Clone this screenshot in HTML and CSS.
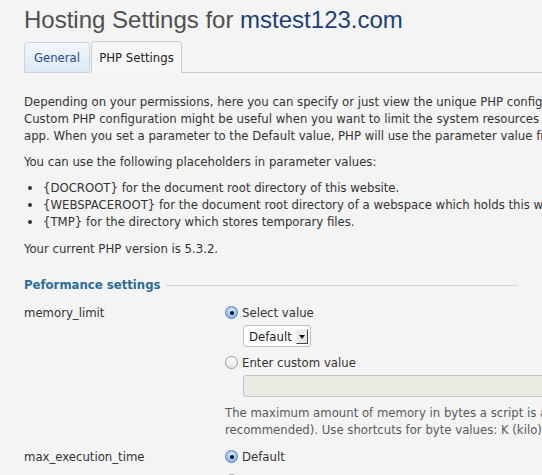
FILE: index.html
```html
<!DOCTYPE html>
<html>
<head>
<meta charset="utf-8">
<link rel="stylesheet" href="styles.css">
</head>
<body>
<h1 class="title">Hosting Settings for <span class="domain">mstest123.com</span></h1>
<div class="tabs">
  <div class="tab tab-general">General</div>
  <div class="tab tab-active">PHP Settings</div>
  <div class="tabs-rest"></div>
</div>
<div class="content">
  <p class="para">Depending on your permissions, here you can specify or just view the unique PHP configuration settings for this website.<br>Custom PHP configuration might be useful when you want to limit the system resources consumed by a website or an<br>app. When you set a parameter to the Default value, PHP will use the parameter value from the server-wide configuration.</p>
  <p class="para">You can use the following placeholders in parameter values:</p>
  <ul class="list">
    <li>{DOCROOT} for the document root directory of this website.</li>
    <li>{WEBSPACEROOT} for the document root directory of a webspace which holds this website.</li>
    <li>{TMP} for the directory which stores temporary files.</li>
  </ul>
  <p class="para">Your current PHP version is 5.3.2.</p>
  <div class="section">
    <span class="section-title">Peformance settings</span>
    <span class="section-line"></span>
  </div>
  <div class="row">
    <div class="label">memory_limit</div>
    <div class="field">
      <div class="opt"><span class="radio checked"></span>Select value</div>
      <div class="sub sub-select"><span class="select">Default<span class="sel-btn"><span class="arrow"></span></span></span></div>
      <div class="opt opt-custom"><span class="radio"></span>Enter custom value</div>
      <div class="sub sub-input"><span class="input"></span></div>
      <div class="help">The maximum amount of memory in bytes a script is allowed to allocate. Set the value to -1 (not<br>recommended). Use shortcuts for byte values: K (kilo), M (mega), G (giga).</div>
    </div>
  </div>
  <div class="row row2">
    <div class="label">max_execution_time</div>
    <div class="field">
      <div class="opt"><span class="radio checked"></span>Default</div>
      <div class="opt opt-custom"><span class="radio"></span>Enter custom value</div>
    </div>
  </div>
</div>
</body>
</html>
```
FILE: styles.css
```css
html, body {
  margin: 0;
  padding: 0;
  background: #f4f4f4;
  overflow: hidden;
  width: 542px;
  height: 475px;
}
body {
  font-family: "DejaVu Sans Condensed", "DejaVu Sans", sans-serif;
  font-size: 13px;
  color: #333;
}
.title {
  margin: 0;
  padding: 5px 24px 0;
  height: 36px;
  font-family: "Liberation Sans", Arial, sans-serif;
  font-weight: normal;
  font-size: 24px;
  line-height: 30px;
  color: #4f4f4f;
  white-space: nowrap;
}
.domain { color: #1c3f78; }
.tabs {
  display: flex;
  align-items: flex-end;
  margin-left: 24px;
  height: 32px;
}
.tab {
  box-sizing: border-box;
  height: 32px;
  line-height: 31px;
  border: 1px solid #c7d5e3;
  border-bottom: none;
  border-radius: 4px 4px 0 0;
  white-space: nowrap;
  text-align: center;
}
.tab-general {
  width: 66px;
  height: 31px;
  color: #1e4e8c;
  background: linear-gradient(#f1f6fb, #dde9f5);
  border-bottom: 1px solid #c7d5e3;
  line-height: 30px;
}
.tab-active {
  width: 91px;
  margin-left: 1px;
  color: #222;
  background: #f6f6f6;
  border-color: #cdcdcd;
}
.tabs-rest {
  flex: 1;
  border-bottom: 1px solid #cdcdcd;
}
.content {
  padding: 20px 24px 0;
  white-space: nowrap;
  line-height: 17px;
}
.para { margin: 0 0 9px; }
.list {
  margin: 0 0 10px;
  padding: 0 0 0 19px;
}
.list li { line-height: 17px; }
.section {
  display: flex;
  align-items: center;
  margin-top: 19px;
  height: 17px;
}
.section-title {
  font-weight: bold;
  color: #2d6c99;
}
.section-line {
  flex: 1;
  height: 1px;
  background: #d6d6d6;
  margin-left: 5px;
  margin-top: 1px;
}
.row {
  display: grid;
  grid-template-columns: 201px 1fr;
  margin-top: 11px;
}
.row2 { margin-top: 10px; }
.label { line-height: 17px; }
.field { min-width: 0; }
.opt {
  display: flex;
  align-items: center;
  height: 17px;
}
.opt-custom { margin-top: 7px; }
.radio {
  box-sizing: border-box;
  width: 13px;
  height: 13px;
  border-radius: 50%;
  border: 1px solid #9a9a9a;
  background: linear-gradient(#ffffff, #e6e6e6);
  margin-right: 4px;
  position: relative;
  flex: none;
}
.radio.checked {
  border-color: #5a7fb0;
  background: radial-gradient(circle at 50% 35%, #d9eaff 0, #9cc3f0 55%, #6e9fdb 100%);
}
.radio.checked::after {
  content: "";
  position: absolute;
  left: 3.5px;
  top: 3.5px;
  width: 4px;
  height: 4px;
  border-radius: 50%;
  background: #111;
}
.sub { padding-left: 18px; }
.sub-select { margin-top: 4px; }
.sub-input { margin-top: 4px; }
.select {
  box-sizing: border-box;
  display: inline-flex;
  align-items: center;
  height: 22px;
  width: 68px;
  padding-left: 5px;
  border: 1px solid #bdbdbd;
  border-radius: 3px;
  background: #fff;
  color: #222;
}
.sel-btn {
  box-sizing: border-box;
  width: 12px;
  height: 15px;
  margin-left: auto;
  margin-right: 2px;
  border: 1px solid #f0f0f0;
  border-right-color: #444;
  border-bottom-color: #444;
  background: #e9e9e9;
  position: relative;
}
.arrow {
  position: absolute;
  left: 2px;
  top: 5px;
  border-left: 3px solid transparent;
  border-right: 3px solid transparent;
  border-top: 4px solid #111;
}
.input {
  box-sizing: border-box;
  display: block;
  height: 22px;
  width: 400px;
  border: 1px solid #c2c2c2;
  border-radius: 3px;
  background: #ebebe4;
}
.help {
  margin-top: 7px;
  color: #5a5a5a;
}
```
